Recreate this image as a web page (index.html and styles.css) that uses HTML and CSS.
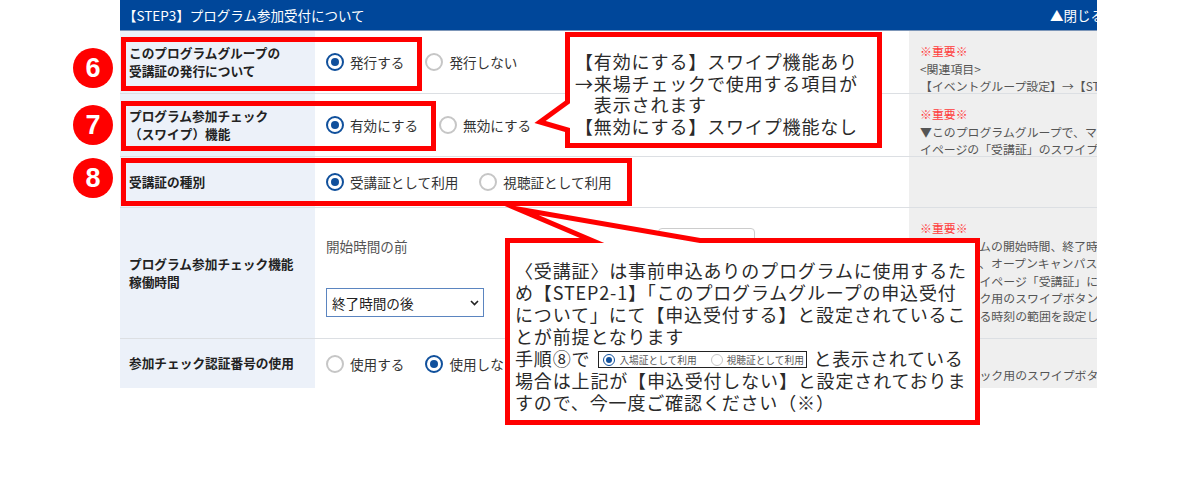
FILE: index.html
```html
<!DOCTYPE html>
<html lang="ja">
<head>
  <meta charset="UTF-8" />
  <meta name="viewport" content="width=device-width, initial-scale=1.0"/>
  <title>STEP3 プログラム参加受付</title>
  <link rel="stylesheet" href="styles.css">
</head>
<body>
  <div class="canvas">

    <section class="sheet">
      <div class="sheet-inner">
        <div class="sheet-head">
          <span>【STEP3】プログラム参加受付について</span>
          <span>▲閉じる</span>
        </div>

        <div class="row row-issue">
          <div class="cell-label">このプログラムグループの<br>受講証の発行について</div>
          <div class="cell-value">
            <label class="radio"><input type="radio" name="issue" checked>発行する</label>
            <label class="radio"><input type="radio" name="issue">発行しない</label>
          </div>
          <div class="cell-note">
            <span class="note-flag">※重要※</span><br>
            &lt;関連項目&gt;<br>
            【イベントグループ設定】→【STEP2】
          </div>
        </div>

        <div class="row row-swipe">
          <div class="cell-label">プログラム参加チェック<br>（スワイプ）機能</div>
          <div class="cell-value">
            <label class="radio"><input type="radio" name="swipe" checked>有効にする</label>
            <label class="radio"><input type="radio" name="swipe">無効にする</label>
          </div>
          <div class="cell-note">
            <span class="note-flag">※重要※</span><br>
            ▼このプログラムグループで、マ<br>
            イページの「受講証」のスワイプ
          </div>
        </div>

        <div class="row row-kind">
          <div class="cell-label">受講証の種別</div>
          <div class="cell-value">
            <label class="radio"><input type="radio" name="kind" checked>受講証として利用</label>
            <label class="radio"><input type="radio" name="kind">視聴証として利用</label>
          </div>
          <div class="cell-note"></div>
        </div>

        <div class="row row-time">
          <div class="cell-label">プログラム参加チェック機能<br>稼働時間</div>
          <div class="cell-value cell-stack">
            <div class="time-line">
              <span class="time-caption">開始時間の前</span>
              <span class="time-input"></span>
            </div>
            <div class="select-box">
              <span>終了時間の後</span>
              <svg width="9" height="6" viewBox="0 0 9 6"><path d="M1 1l3.5 3.5L8 1" fill="none" stroke="#222" stroke-width="1.6"/></svg>
            </div>
          </div>
          <div class="cell-note">
            <span class="note-flag">※重要※</span><br>
            ▼プログラムの開始時間、終了時<br>
            間を基準に、オープンキャンパス<br>
            参加者のマイページ「受講証」に<br>
            参加チェック用のスワイプボタン<br>
            が表示される時刻の範囲を設定し
          </div>
        </div>

        <div class="row row-code">
          <div class="cell-label">参加チェック認証番号の使用</div>
          <div class="cell-value">
            <label class="radio"><input type="radio" name="code">使用する</label>
            <label class="radio"><input type="radio" name="code" checked>使用しない</label>
          </div>
          <div class="cell-note note-single">
            ▼参加チェック用のスワイプボタ
          </div>
        </div>
      </div>
    </section>

    <!-- step markers and frames -->
    <div class="marker marker-6">6</div>
    <div class="marker marker-7">7</div>
    <div class="marker marker-8">8</div>
    <div class="frame frame-6"></div>
    <div class="frame frame-7"></div>
    <div class="frame frame-8"></div>

    <!-- speech bubbles -->
    <div class="callout callout-swipe">
      <svg class="callout-shape" width="346" height="116" viewBox="0 0 346 116">
        <polygon points="31.5,2.5 343.5,2.5 343.5,113.5 31.5,113.5 31.5,98 4,90 31.5,70" />
      </svg>
      <p class="callout-text">【有効にする】スワイプ機能あり<br>→来場チェックで使用する項目が<br>　表示されます<br>【無効にする】スワイプ機能なし</p>
    </div>

    <div class="callout callout-kind">
      <svg class="callout-shape" width="475" height="220" viewBox="0 0 475 220">
        <polygon points="2.5,34.5 87,34.5 13,3 195,34.5 472.5,34.5 472.5,216.5 2.5,216.5" />
      </svg>
      <p class="callout-text">〈受講証〉は事前申込ありのプログラムに使用するた<br>め【STEP2-1】「このプログラムグループの申込受付<br>について」にて【申込受付する】と設定されているこ<br>とが前提となります<br>手順⑧で<span class="mini-field"><span class="mini-radio is-on"></span>入場証として利用<span class="mini-radio"></span>視聴証として利用</span>と表示されている<br>場合は上記が【申込受付しない】と設定されておりま<br>すので、今一度ご確認ください（※）</p>
    </div>

  </div>
</body>
</html>
```

FILE: styles.css
```css
body {
  margin: 0;
  font-family: "Noto Sans CJK JP", "Noto Sans", sans-serif;
  background: #fff;
  color: #333;
}
.canvas {
  position: relative;
  width: 1192px;
  height: 498px;
  overflow: hidden;
}
.sheet {
  margin-left: 120px;
  width: 977px;
  overflow: hidden;
}
.sheet-inner {
  width: 995px;
}
.sheet-head {
  height: 31px;
  box-sizing: border-box;
  background: #00479a;
  border-bottom: 1px solid #7d96b8;
  color: #fff;
  font-size: 13.5px;
  display: flex;
  align-items: center;
  justify-content: space-between;
  padding: 0 11px 0 3px;
}
.row {
  display: grid;
  grid-template-columns: 195px 594px 1fr;
  box-sizing: border-box;
  border-bottom: 1px solid #dcdfe3;
}
.row-issue { height: 63px; }
.row-swipe { height: 63px; }
.row-kind { height: 51px; }
.row-time { height: 131px; }
.row-code { height: 49px; border-bottom: none; }

.cell-label {
  background: #ecf1f9;
  padding-left: 9px;
  display: flex;
  align-items: center;
  font-size: 12.7px;
  font-weight: 700;
  line-height: 18.5px;
  color: #222;
}
.cell-value {
  padding-left: 11px;
  display: flex;
  align-items: center;
  font-size: 13.6px;
  color: #333;
}
.cell-note {
  background: #efefef;
  padding: 11px 0 0 11px;
  font-size: 11.9px;
  line-height: 17.6px;
  color: #555;
  white-space: nowrap;
  overflow: hidden;
}
.note-single {
  padding-top: 27px;
}
.note-flag {
  color: #ff3b3b;
}

/* radio buttons */
.radio {
  display: inline-flex;
  align-items: center;
  margin-right: 21px;
}
.radio input {
  appearance: none;
  -webkit-appearance: none;
  width: 18px;
  height: 18px;
  margin: 0 6px 0 0;
  box-sizing: border-box;
  border: 2px solid #c6c6c6;
  border-radius: 50%;
  background: #fff;
  display: grid;
  place-content: center;
}
.radio input:checked {
  border-color: #10509c;
}
.radio input:checked::before {
  content: "";
  width: 8px;
  height: 8px;
  border-radius: 50%;
  background: #10509c;
}

/* time settings */
.cell-stack {
  display: block;
  padding-top: 20px;
}
.time-line {
  display: flex;
  align-items: center;
  height: 36px;
}
.time-caption {
  width: 332px;
  color: #555;
}
.time-input {
  width: 97px;
  height: 36px;
  box-sizing: border-box;
  border: 1px solid #ccc;
  border-radius: 4px;
}
.select-box {
  margin-top: 24px;
  width: 158px;
  height: 29px;
  box-sizing: border-box;
  border: 1px solid #5b85c0;
  display: flex;
  align-items: center;
  justify-content: space-between;
  padding: 0 4px 0 5px;
  font-size: 13.6px;
  color: #222;
}

/* annotations */
.marker {
  position: absolute;
  left: 73px;
  width: 40px;
  height: 40px;
  border-radius: 50%;
  background: #f00;
  color: #fff;
  font: 700 27px "Liberation Sans", Arial, sans-serif;
  display: flex;
  align-items: center;
  justify-content: center;
}
.marker-6 { top: 48px; }
.marker-7 { top: 105px; }
.marker-8 { top: 158px; }

.frame {
  position: absolute;
  left: 121px;
  box-sizing: border-box;
  border: 5px solid #f00;
}
.frame-6 { top: 37px; width: 301px; height: 54px; }
.frame-7 { top: 101px; width: 315px; height: 50px; }
.frame-8 { top: 158px; width: 511px; height: 48px; }

.callout {
  position: absolute;
}
.callout-shape {
  position: absolute;
  left: 0;
  top: 0;
  overflow: visible;
}
.callout-shape polygon {
  fill: #fff;
  stroke: #f00;
  stroke-width: 5;
  stroke-linejoin: miter;
  stroke-miterlimit: 10;
}
.callout-text {
  position: absolute;
  margin: 0;
  font-size: 18px;
  letter-spacing: 0.85px;
  color: #2a2a2a;
  white-space: nowrap;
}
.callout-swipe {
  left: 536px;
  top: 32px;
  width: 346px;
  height: 116px;
}
.callout-swipe .callout-text {
  left: 39px;
  top: 19px;
  line-height: 21.7px;
}
.callout-kind {
  left: 505px;
  top: 206px;
  width: 475px;
  height: 220px;
}
.callout-kind .callout-text {
  left: 10px;
  top: 53px;
  line-height: 22px;
}

.mini-field {
  display: inline-flex;
  align-items: center;
  vertical-align: middle;
  width: 209px;
  height: 17px;
  box-sizing: border-box;
  margin: -3px 6px 0 8px;
  padding-left: 4px;
  border: 1px solid #222;
  font-size: 9.7px;
  letter-spacing: 0;
  color: #555;
}
.mini-radio {
  width: 12px;
  height: 12px;
  box-sizing: border-box;
  border: 1.5px solid #c6c6c6;
  border-radius: 50%;
  margin-right: 4px;
  display: grid;
  place-content: center;
}
.mini-field .mini-radio:last-of-type {
  margin-left: 14px;
}
.mini-radio.is-on {
  border-color: #10509c;
  margin-left: 0;
}
.mini-radio.is-on::before {
  content: "";
  width: 6px;
  height: 6px;
  border-radius: 50%;
  background: #10509c;
}
```
